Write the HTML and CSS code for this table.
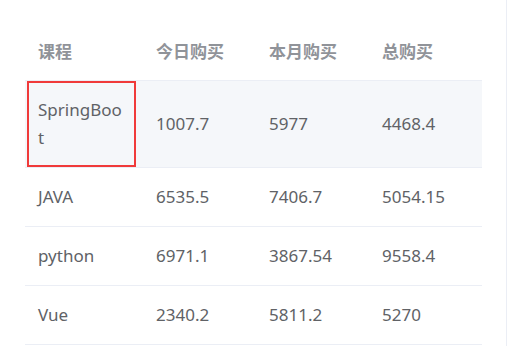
FILE: index.html
```html
<!DOCTYPE html>
<html lang="zh">
<head>
<meta charset="utf-8">
<link rel="stylesheet" href="styles.css">
</head>
<body>
<div class="panel">
  <table class="grid">
    <colgroup>
      <col class="c-first">
      <col class="c-col">
      <col class="c-col">
      <col class="c-col">
    </colgroup>
    <thead>
      <tr>
        <th>课程</th>
        <th>今日购买</th>
        <th>本月购买</th>
        <th>总购买</th>
      </tr>
    </thead>
    <tbody>
      <tr class="hover">
        <td class="marked"><span class="cell">SpringBoot</span><span class="mark"></span></td>
        <td><span class="cell">1007.7</span></td>
        <td><span class="cell">5977</span></td>
        <td><span class="cell">4468.4</span></td>
      </tr>
      <tr>
        <td class="first"><span class="cell">JAVA</span></td>
        <td><span class="cell">6535.5</span></td>
        <td><span class="cell">7406.7</span></td>
        <td><span class="cell">5054.15</span></td>
      </tr>
      <tr>
        <td class="first"><span class="cell">python</span></td>
        <td><span class="cell">6971.1</span></td>
        <td><span class="cell">3867.54</span></td>
        <td><span class="cell">9558.4</span></td>
      </tr>
      <tr>
        <td class="first"><span class="cell">Vue</span></td>
        <td><span class="cell">2340.2</span></td>
        <td><span class="cell">5811.2</span></td>
        <td><span class="cell">5270</span></td>
      </tr>
    </tbody>
  </table>
</div>
</body>
</html>
```

FILE: styles.css
```css
html, body {
  margin: 0;
  padding: 0;
  background: #ffffff;
}

.panel {
  box-sizing: border-box;
  width: 507px;
  height: 346px;
  padding: 22px 0 0 25px;
  border-right: 1px solid #ebeef5;
  overflow: hidden;
}

.grid {
  width: 457px;
  table-layout: fixed;
  border-collapse: collapse;
  font-family: "Noto Sans", "Noto Sans CJK SC", sans-serif;
  font-size: 17px;
  line-height: 28px;
  color: #606266;
}

.c-first { width: 118px; }
.c-col { width: 113px; }

.grid th,
.grid td {
  padding: 15px 12px 15px 13px;
  text-align: left;
  vertical-align: middle;
  border-bottom: 1px solid #ebeef5;
}

.grid th {
  font-family: "Noto Sans CJK SC", "Noto Sans", sans-serif;
  font-weight: bold;
  color: #909399;
}

.grid td.marked,
.grid td.first {
  padding-right: 18px;
}

.cell {
  display: block;
  word-break: break-all;
}

.hover td {
  background: #f5f7fa;
}

.marked {
  position: relative;
}

.mark {
  position: absolute;
  left: 2px;
  top: 0;
  width: 109px;
  height: 86px;
  box-sizing: border-box;
  border: 2px solid #f03a3a;
}
```
